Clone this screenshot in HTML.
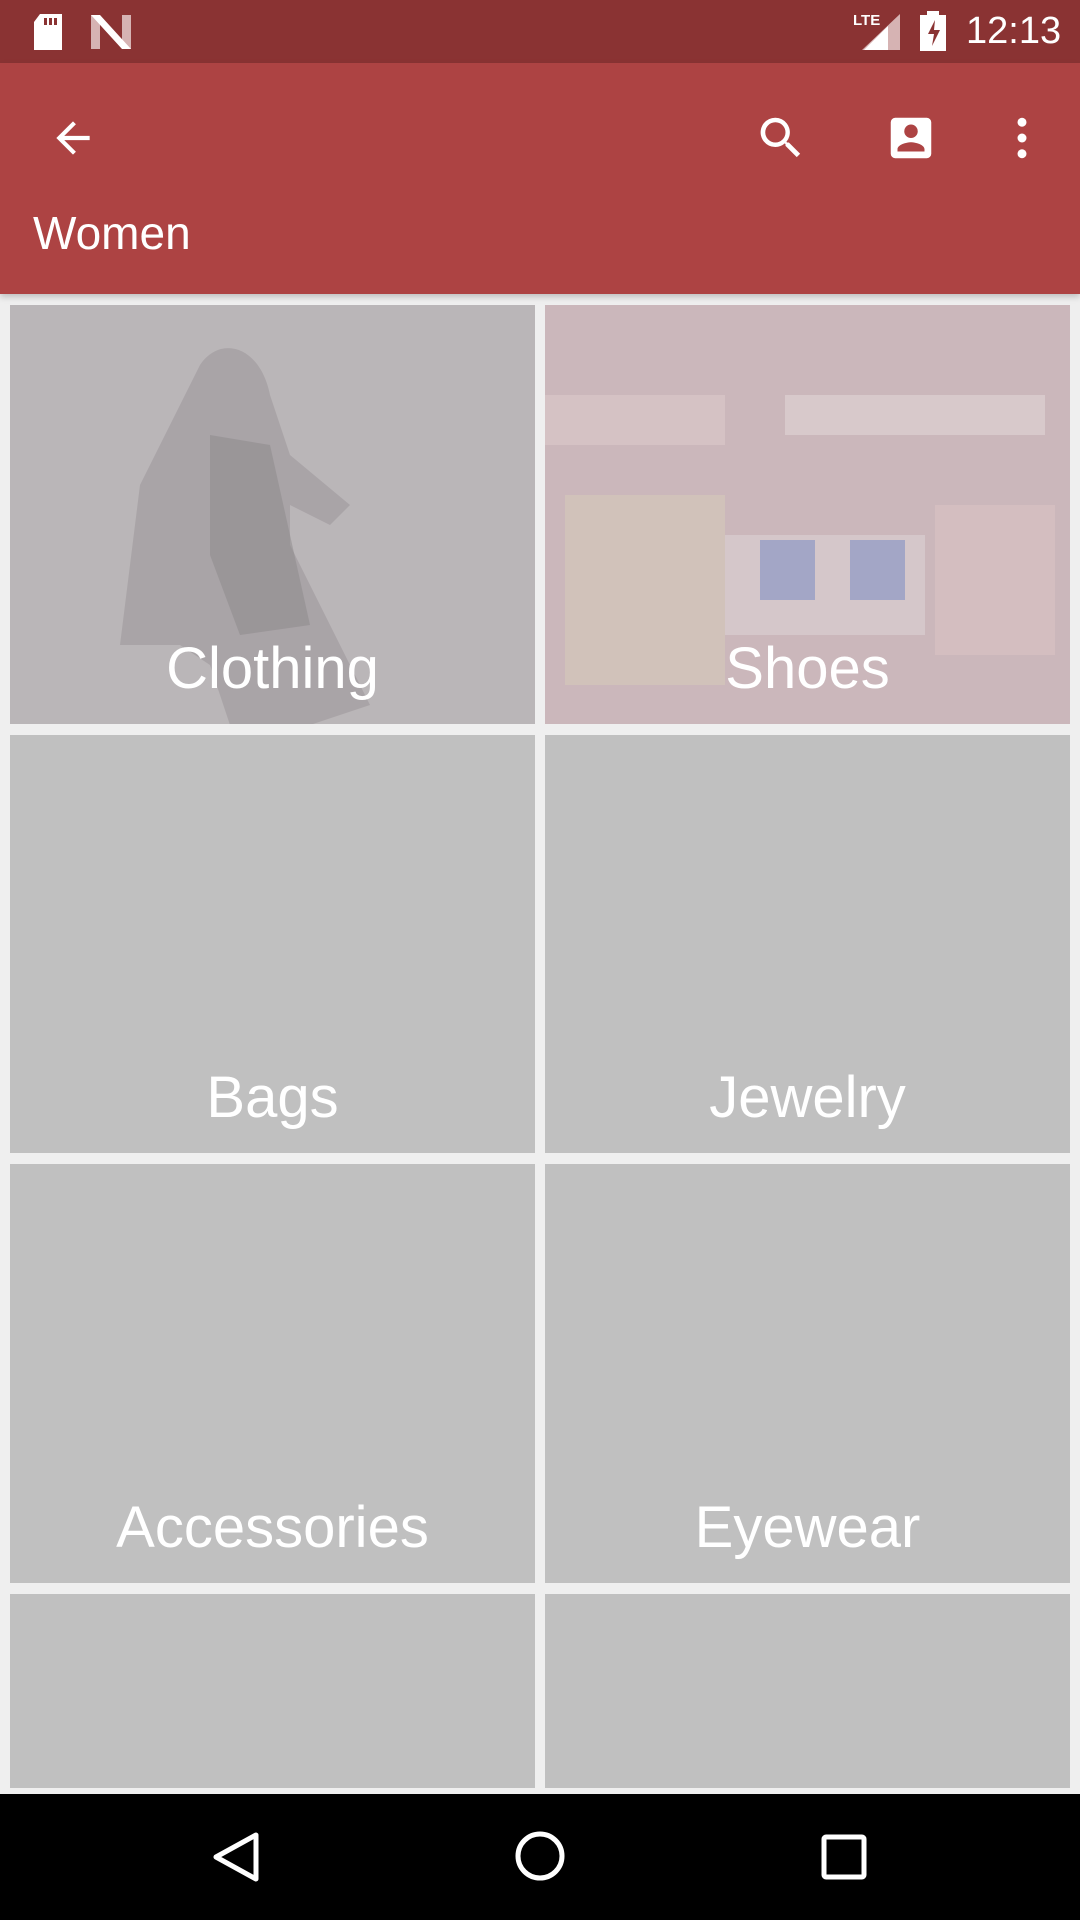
<!DOCTYPE html>
<html><head><meta charset="utf-8"><style>
*{margin:0;padding:0;box-sizing:border-box}
body{width:1080px;height:1920px;background:#efefef;font-family:"Liberation Sans",sans-serif;position:relative;overflow:hidden}
.sb{position:absolute;left:0;top:0;width:1080px;height:63px;background:#8a3333}
.ab{position:absolute;left:0;top:63px;width:1080px;height:231px;background:#ad4343;box-shadow:0 3px 6px rgba(0,0,0,.2)}
.title{position:absolute;left:33px;top:206px;color:#fff;font-size:46px}
.t{position:absolute;background:#c0c0c0;overflow:hidden}
.t span{position:absolute;left:0;right:0;bottom:22px;text-align:center;color:#fff;font-size:58px}
.nav{position:absolute;left:0;top:1794px;width:1080px;height:126px;background:#000}
</style></head><body>
<div class="sb">
<svg style="position:absolute;left:32px;top:14px" width="32" height="36"><path d="M8 0H30V36H2V8Z" fill="#fff"/><rect x="12" y="4" width="3" height="7" fill="#8a3333"/><rect x="17" y="4" width="3" height="7" fill="#8a3333"/><rect x="22" y="4" width="3" height="7" fill="#8a3333"/></svg>
<svg style="position:absolute;left:91px;top:15px" width="40" height="34"><path d="M0 0h9v34H0z" fill="#d6b3b3"/><path d="M31 0h9v34h-9z" fill="#d6b3b3"/><path d="M0 0h9l31 34h-9z" fill="#fff"/></svg>
<div style="position:absolute;left:853px;top:12px;color:#fff;font-size:15px;font-weight:bold">LTE</div>
<svg style="position:absolute;left:862px;top:14px" width="38" height="36"><path d="M38 0V36H0Z" fill="#d6b3b3"/><path d="M26 12V36H2Z" fill="#fff"/></svg>
<svg style="position:absolute;left:920px;top:11px" width="26" height="40"><path d="M7 0h12v4h7v36H0V4h7z" fill="#fff"/><path d="M15 9l-7 14h6l-2 12 8-16h-6z" fill="#8a3333"/></svg>
<div style="position:absolute;left:966px;top:10px;color:#fff;font-size:38px">12:13</div>
</div>
<div class="ab">
<svg style="position:absolute;left:48px;top:50px" width="50" height="50" viewBox="0 0 24 24"><path d="M20 11H7.8l5.6-5.6L12 4l-8 8 8 8 1.4-1.4L7.8 13H20z" fill="#fff"/></svg>
<svg style="position:absolute;left:754px;top:48px" width="54" height="54" viewBox="0 0 24 24"><path d="M15.5 14h-.8l-.3-.3A6.5 6.5 0 1 0 9.5 16a6.5 6.5 0 0 0 4.2-1.6l.3.3v.8l5 5 1.5-1.5zm-6 0A4.5 4.5 0 1 1 14 9.5 4.5 4.5 0 0 1 9.5 14z" fill="#fff"/></svg>
<svg style="position:absolute;left:884px;top:48px" width="54" height="54" viewBox="0 0 24 24"><path d="M3 5v14a2 2 0 0 0 2 2h14a2 2 0 0 0 2-2V5a2 2 0 0 0-2-2H5a2 2 0 0 0-2 2zm12 4a3 3 0 1 1-6 0 3 3 0 0 1 6 0zm-9 8c0-2 4-3.1 6-3.1s6 1.1 6 3.1v1H6z" fill="#fff"/></svg>
<svg style="position:absolute;left:995px;top:48px" width="54" height="54" viewBox="0 0 24 24"><circle cx="12" cy="5" r="2" fill="#fff"/><circle cx="12" cy="12" r="2" fill="#fff"/><circle cx="12" cy="19" r="2" fill="#fff"/></svg>
</div>
<div class="title">Women</div>
<div class="t" style="left:10px;top:305px;width:525px;height:419px;background:#bab6b8">
<svg width="525" height="419" style="position:absolute;left:0;top:0"><path d="M190 60c20-30 60-20 70 30l20 60 60 50-20 20-40-20 0 40 60 120 20 40-60 20-80 0-20-60-30-20-60 0 20-160z" fill="#a29d9f" opacity=".7"/><path d="M200 130l60 10 40 180-70 10-30-80z" fill="#8c878a" opacity=".5"/></svg>
<span>Clothing</span></div>
<div class="t" style="left:545px;top:305px;width:525px;height:419px;background:#cbb7bb">
<svg width="525" height="419" style="position:absolute;left:0;top:0"><rect x="0" y="90" width="180" height="50" fill="#d8c6c8" opacity=".7"/><rect x="20" y="190" width="160" height="190" fill="#d5c9b9" opacity=".6"/><rect x="240" y="90" width="260" height="40" fill="#ddd0d2" opacity=".7"/><rect x="180" y="230" width="200" height="100" fill="#d9cdd0" opacity=".7"/><rect x="215" y="235" width="55" height="60" fill="#a3a6c6"/><rect x="305" y="235" width="55" height="60" fill="#a3a6c6"/><rect x="390" y="200" width="120" height="150" fill="#d7c1c2" opacity=".7"/></svg>
<span>Shoes</span></div>
<div class="t" style="left:10px;top:735px;width:525px;height:418px"><span>Bags</span></div>
<div class="t" style="left:545px;top:735px;width:525px;height:418px"><span>Jewelry</span></div>
<div class="t" style="left:10px;top:1164px;width:525px;height:419px"><span>Accessories</span></div>
<div class="t" style="left:545px;top:1164px;width:525px;height:419px"><span>Eyewear</span></div>
<div class="t" style="left:10px;top:1594px;width:525px;height:194px"></div>
<div class="t" style="left:545px;top:1594px;width:525px;height:194px"></div>
<div class="nav">
<svg style="position:absolute;left:212px;top:38px" width="48" height="50"><path d="M44 3V47L4 25Z" fill="none" stroke="#fff" stroke-width="5" stroke-linejoin="round"/></svg>
<svg style="position:absolute;left:514px;top:36px" width="52" height="52"><circle cx="26" cy="26" r="22" fill="none" stroke="#fff" stroke-width="5"/></svg>
<svg style="position:absolute;left:821px;top:40px" width="46" height="46"><rect x="3" y="3" width="40" height="40" rx="2" fill="none" stroke="#fff" stroke-width="5"/></svg>
</div>
</body></html>
